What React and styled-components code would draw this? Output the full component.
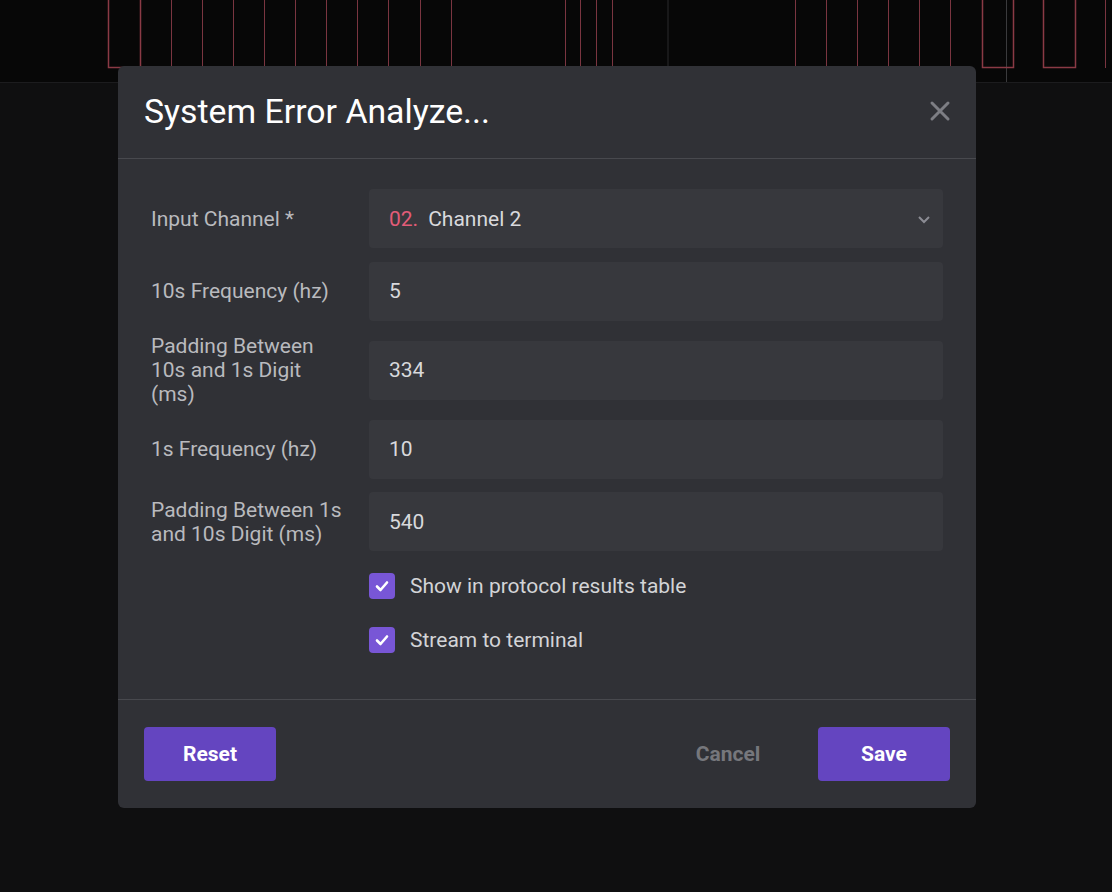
import React from 'react';
import styled, { createGlobalStyle } from 'styled-components';

const GlobalStyle = createGlobalStyle`
  html, body {
    margin: 0;
    padding: 0;
    background: #0f0f10;
    font-family: Roboto, 'Noto Sans', sans-serif;
  }
`;

const Page = styled.div`
  width: 1112px;
  height: 892px;
  background: #0f0f10;
  display: flex;
  flex-direction: column;
  overflow: hidden;
`;

const Track = styled.div`
  height: 82px;
  flex: none;
  background: #070707;
  border-bottom: 1px solid #1c1c1e;
`;

const Stage = styled.div`
  flex: 1;
  display: flex;
  align-items: flex-start;
  margin-top: -17px;
  padding-left: 118px;
`;

const Modal = styled.div`
  width: 858px;
  background: #303136;
  border-radius: 6px;
  display: flex;
  flex-direction: column;
  color: #d6d7da;
`;

const Header = styled.div`
  height: 93px;
  display: flex;
  align-items: center;
  justify-content: space-between;
  padding: 0 22px 2px 26px;
  box-sizing: border-box;
  border-bottom: 1px solid #48494e;
`;

const Title = styled.h1`
  margin: 0;
  font-size: 33.8px;
  font-weight: 400;
  color: #ffffff;
`;

const CloseButton = styled.button`
  background: none;
  border: 0;
  padding: 0;
  width: 28px;
  height: 28px;
  display: flex;
  align-items: center;
  justify-content: center;
  cursor: pointer;
`;

const Body = styled.div`
  padding: 30px 33px 46px 33px;
  display: flex;
  flex-direction: column;
  gap: 13.5px;
`;

const Row = styled.div`
  display: grid;
  grid-template-columns: 218px 1fr;
  align-items: center;
`;

const Label = styled.label`
  font-size: 21px;
  line-height: 24px;
  color: #b9babe;
  padding-right: 22px;
`;

const Field = styled.div`
  height: 59px;
  background: #37383d;
  border-radius: 4px;
  display: flex;
  align-items: center;
  padding: 0 20px;
  font-size: 21px;
  color: #d8d9dc;
  box-sizing: border-box;
`;

const Prefix = styled.span`
  color: #e25c78;
  margin-right: 10px;
`;

const Chevron = styled.span`
  margin-left: auto;
  display: flex;
  margin-right: -8px;
`;

const Checks = styled.div`
  display: flex;
  flex-direction: column;
  gap: 28px;
  padding-left: 218px;
  margin-top: 8.5px;
`;

const CheckRow = styled.div`
  display: flex;
  align-items: center;
  gap: 15px;
  font-size: 21px;
  color: #d3d4d7;
`;

const Box = styled.span`
  width: 26px;
  height: 26px;
  border-radius: 4px;
  background: #7856d6;
  display: flex;
  align-items: center;
  justify-content: center;
`;

const Footer = styled.div`
  border-top: 1px solid #48494e;
  padding: 27px 26px 27px 26px;
  display: flex;
  align-items: center;
`;

const Button = styled.button`
  width: 132px;
  height: 54px;
  border: 0;
  border-radius: 4px;
  margin-right: ${p => (p.$ghost ? '24px' : '0')};
  background: ${p => (p.$ghost ? 'transparent' : '#6445c0')};
  color: ${p => (p.$ghost ? '#76777c' : '#ffffff')};
  font-family: Roboto, sans-serif;
  font-size: 21px;
  font-weight: 700;
  cursor: pointer;
`;

const Spacer = styled.div`
  flex: 1;
`;

const pulses = [
  [108, 140, true], [171], [202], [233], [264], [295], [326], [357], [388], [420], [451],
  [565], [580], [596], [612], [795], [826], [857], [888], [919], [950],
  [982, 1013, true], [1043, 1075, true], [1105]
];

const Waveform = () => (
  <svg width="1112" height="82" viewBox="0 0 1112 82">
    <line x1="668" y1="0" x2="668" y2="82" stroke="#2a2a2c" strokeWidth="1" />
    <line x1="1006.5" y1="0" x2="1006.5" y2="82" stroke="#3a3a3c" strokeWidth="1" />
    {pulses.map(([a, b, box], i) =>
      box ? (
        <polyline
          key={i}
          points={`${a + 0.5},0 ${a + 0.5},67.5 ${b + 0.5},67.5 ${b + 0.5},0`}
          fill="none"
          stroke="#8a3a45"
          strokeWidth="1.5"
        />
      ) : (
        <line key={i} x1={a + 0.5} y1="0" x2={a + 0.5} y2="68" stroke="#7a3540" strokeWidth="1" />
      )
    )}
  </svg>
);

const rows = [
  { label: 'Input Channel *', value: 'Channel 2', prefix: '02.', select: true },
  { label: '10s Frequency (hz)', value: '5' },
  { label: 'Padding Between 10s and 1s Digit (ms)', value: '334' },
  { label: '1s Frequency (hz)', value: '10' },
  { label: 'Padding Between 1s and 10s Digit (ms)', value: '540' }
];

const checks = ['Show in protocol results table', 'Stream to terminal'];

const App = () => (
  <Page>
    <GlobalStyle />
    <Track>
      <Waveform />
    </Track>
    <Stage>
      <Modal>
        <Header>
          <Title>System Error Analyze...</Title>
          <CloseButton>
            <svg width="22" height="22" viewBox="0 0 22 22">
              <path d="M3 3 L19 19 M19 3 L3 19" stroke="#7d7e84" strokeWidth="3" strokeLinecap="round" />
            </svg>
          </CloseButton>
        </Header>
        <Body>
          {rows.map(r => (
            <Row key={r.label}>
              <Label>{r.label}</Label>
              <Field>
                {r.prefix && <Prefix>{r.prefix}</Prefix>}
                {r.value}
                {r.select && (
                  <Chevron>
                    <svg width="14" height="10" viewBox="0 0 14 10">
                      <path d="M2 3 L7 8 L12 3" fill="none" stroke="#8b8c94" strokeWidth="2" />
                    </svg>
                  </Chevron>
                )}
              </Field>
            </Row>
          ))}
          <Checks>
            {checks.map(c => (
              <CheckRow key={c}>
                <Box>
                  <svg width="14" height="12" viewBox="0 0 14 12">
                    <path d="M2 6.5 L5.5 10 L12 2.5" fill="none" stroke="#ffffff" strokeWidth="2.6" strokeLinecap="round" strokeLinejoin="round" />
                  </svg>
                </Box>
                {c}
              </CheckRow>
            ))}
          </Checks>
        </Body>
        <Footer>
          <Button>Reset</Button>
          <Spacer />
          <Button $ghost>Cancel</Button>
          <Button>Save</Button>
        </Footer>
      </Modal>
    </Stage>
  </Page>
);

export default App;
